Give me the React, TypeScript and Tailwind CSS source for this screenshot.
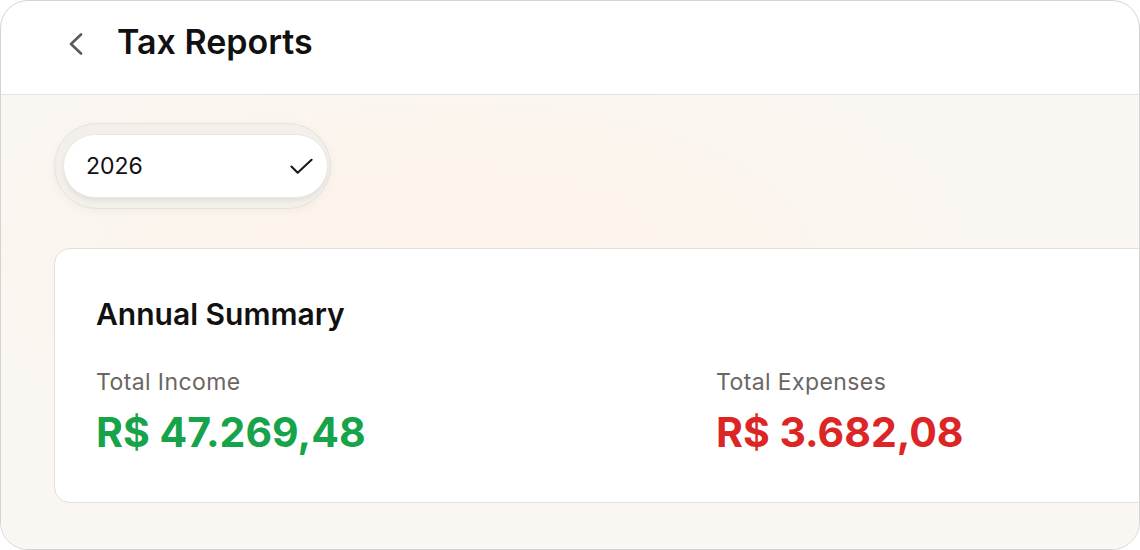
export default function App() {
  return (
    <div className="w-[1140px] h-[550px] bg-white font-['Inter',sans-serif]">
      <div className="w-full h-full rounded-[28px] border border-[#d4d4d4] overflow-hidden flex flex-col bg-white">
        <header className="h-[94px] shrink-0 flex items-start border-b border-[#e6e3e0] pl-[67px] pt-[24px]">
          <svg width="16" height="22" viewBox="0 0 16 22" className="mt-[8px] shrink-0" fill="none">
            <polyline points="13,1.5 3,11 13,20.5" stroke="#5a5a5a" strokeWidth="2.6" strokeLinecap="round" strokeLinejoin="round" />
          </svg>
          <h1 className="ml-[33px] text-[34px] font-semibold text-[#111] leading-none">
            Tax Reports
          </h1>
        </header>

        <main className="flex-1 bg-[radial-gradient(ellipse_at_40%_35%,#fdf3ea_0%,#faf6f1_55%)] pl-[53px] pt-[28px] overflow-hidden">
          <div className="w-[277px] h-[86px] rounded-full border border-[#e6e2dd] bg-[#f3efea] pl-[8px] pt-[10px] pr-[2px] pb-[10px] shadow-[0_2px_10px_rgba(0,0,0,0.04)]">
            <div className="h-full rounded-full bg-white border border-[#ebe7e2] flex items-center justify-between pl-[22px] pr-[14px] shadow-[0_3px_4px_rgba(0,0,0,0.06)]">
              <span className="text-[23px] text-[#111] leading-none">2026</span>
              <svg width="23" height="17" viewBox="0 0 24 17" fill="none">
                <polyline points="1.5,8.5 8,15 22.5,1.5" stroke="#1a1a1a" strokeWidth="2.2" strokeLinecap="round" strokeLinejoin="round" />
              </svg>
            </div>
          </div>

          <section className="mt-[39px] w-[1330px] h-[255px] rounded-[16px] border border-[#e3dfda] bg-white pl-[41px] pt-[50px]">
            <h2 className="text-[30px] font-semibold text-[#111] leading-none">
              Annual Summary
            </h2>
            <div className="mt-[42px] grid grid-cols-[620px_1fr]">
              <div>
                <div className="text-[23px] text-[#6b6663] leading-none tracking-[0.4px]">Total Income</div>
                <div className="mt-[18px] text-[41px] font-bold text-[#16a34a] leading-none">
                  R$ 47.269,48
                </div>
              </div>
              <div>
                <div className="text-[23px] text-[#6b6663] leading-none tracking-[0.4px]">Total Expenses</div>
                <div className="mt-[18px] text-[41px] font-bold text-[#dc2626] leading-none">
                  R$ 3.682,08
                </div>
              </div>
            </div>
          </section>
        </main>
      </div>
    </div>
  );
}
